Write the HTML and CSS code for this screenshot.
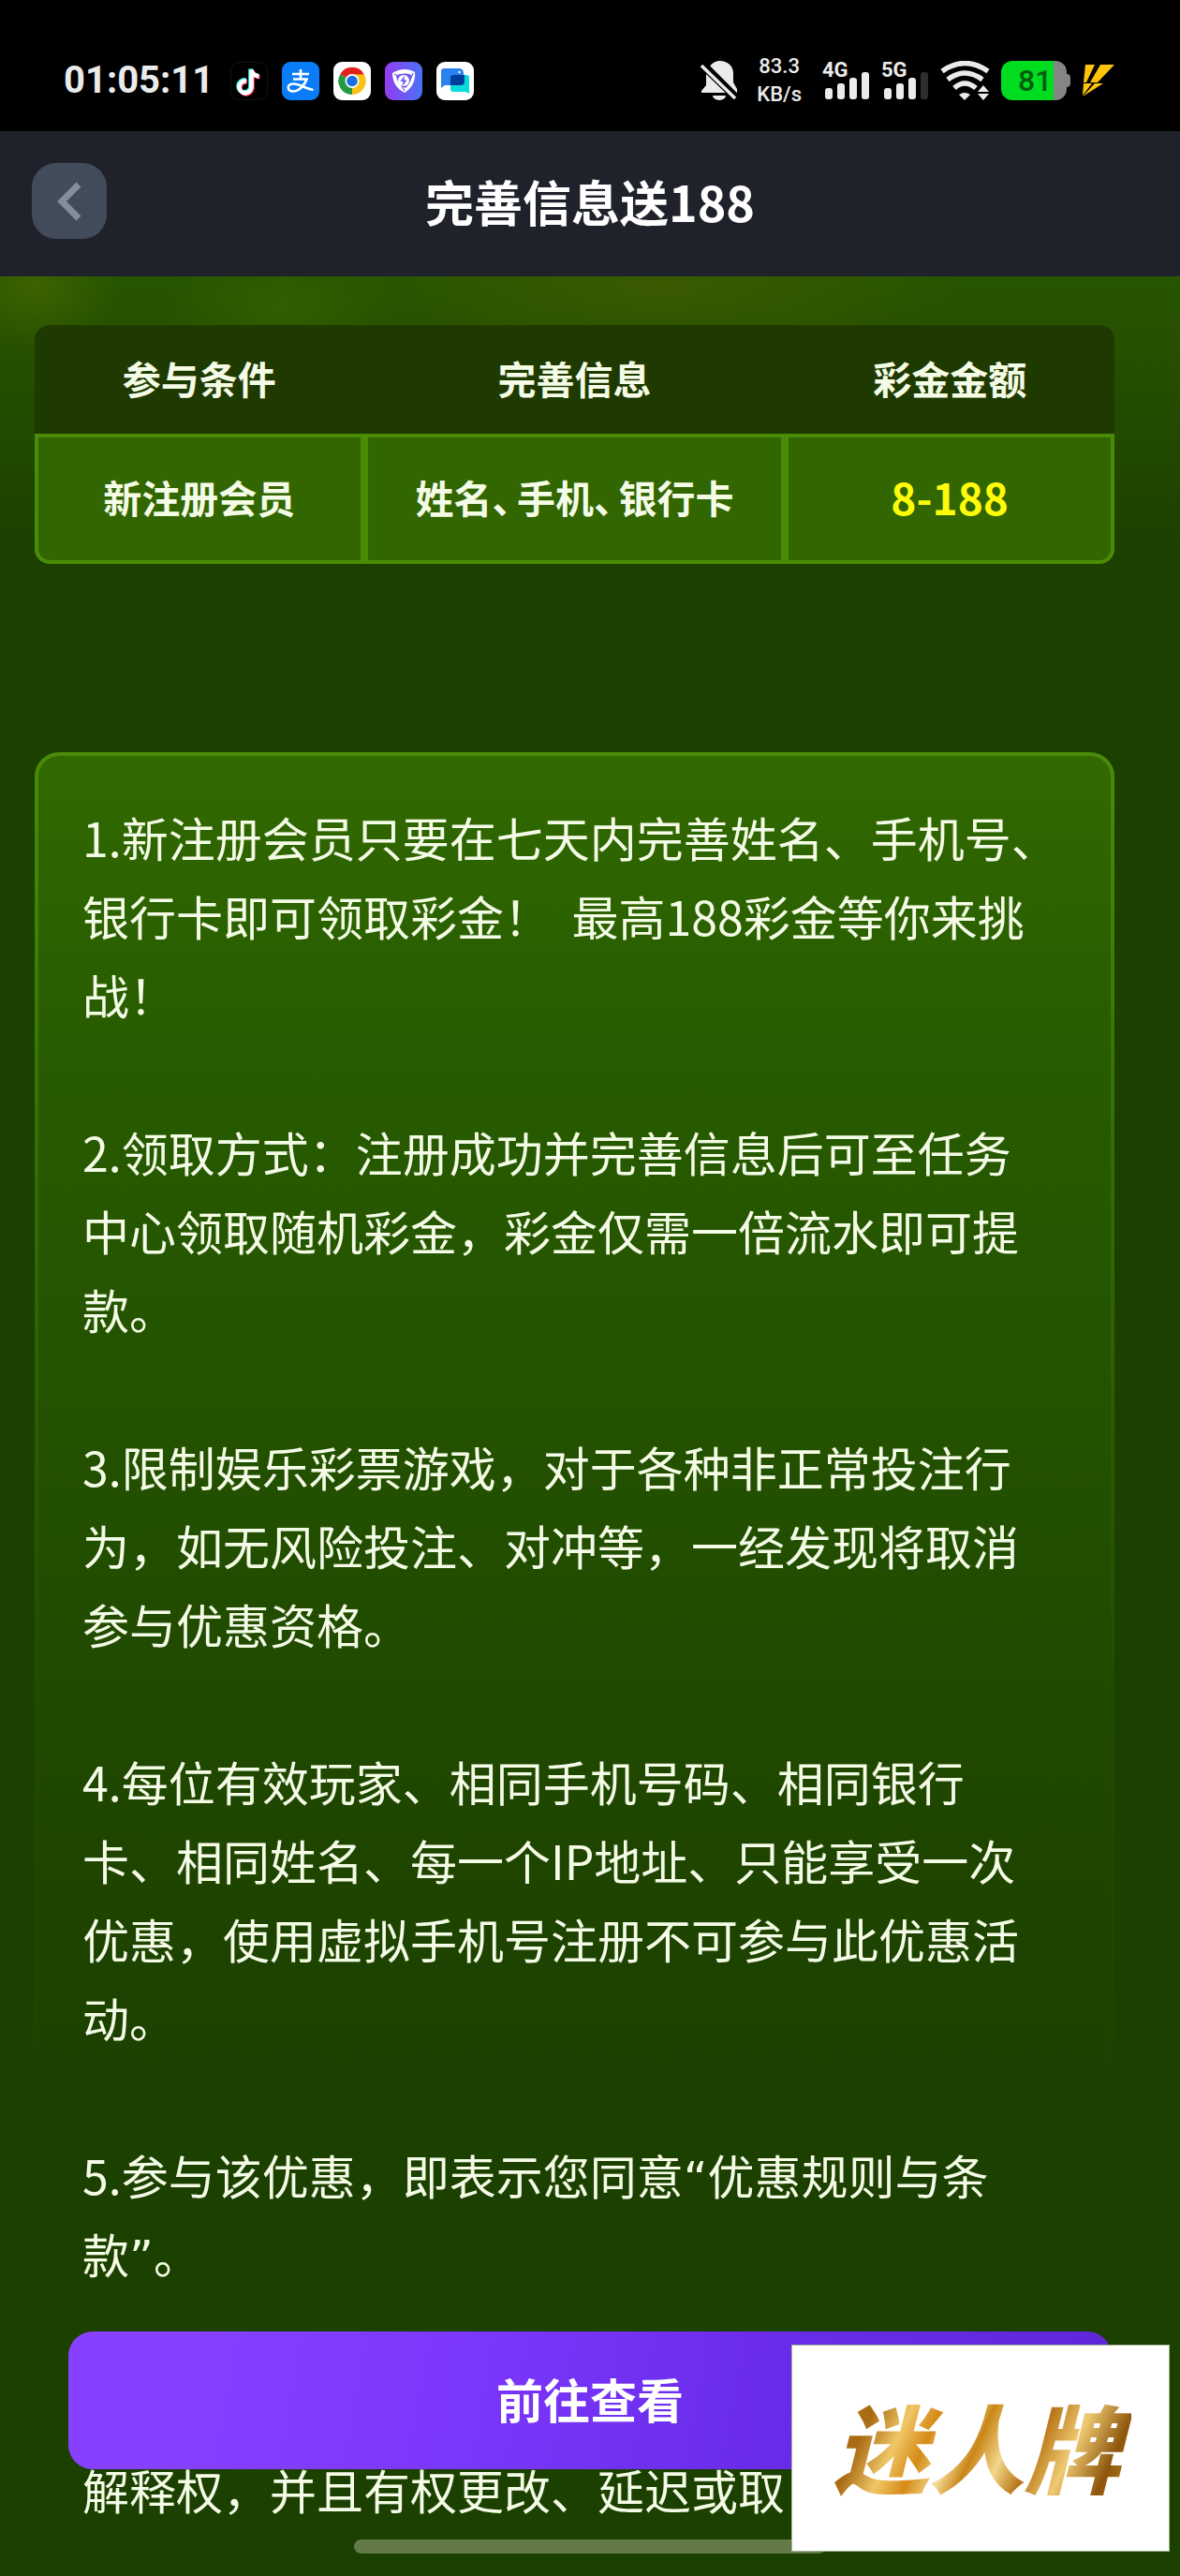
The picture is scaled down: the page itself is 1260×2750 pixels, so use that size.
FILE: index.html
```html
<!DOCTYPE html>
<html lang="zh-CN">
<head>
<meta charset="utf-8">
<meta name="viewport" content="width=device-width, initial-scale=1">
<title>完善信息送188</title>
<link rel="stylesheet" href="styles.css">
</head>
<body>
<div class="status">
  <div class="status-left">
    <span class="clock">01:05:11</span>
    <svg class="app" viewBox="0 0 40 41"><rect x=".5" y=".5" width="39" height="40" rx="9" fill="#000" stroke="#141414"/>
      <g fill="none" stroke-width="4.6"><path d="M16 19.500a6.500 6.500 0 1 0 5.500 6.500V7.500c.6 4 3.500 6.500 8 7" stroke="#25f4ee"/><path d="M18 21.500a6.500 6.500 0 1 0 5.500 6.500V9.500c.6 4 3.500 6.500 8 7" stroke="#fe2c55"/><path d="M17 20.500a6.500 6.500 0 1 0 5.500 6.500V8.500c.6 4 3.500 6.500 8 7" stroke="#fff"/></g></svg>
    <svg class="app" viewBox="0 0 40 41"><rect width="40" height="41" rx="9" fill="#0a7cf8"/>
      <g fill="none" stroke="#fff" stroke-width="2.600"><path d="M11 13h18M20 8v10M12 18.500h14.500c-2 6-8 13-14.500 13-7 0-7-8 0-8 8 0 12 5 21.500 6.500"/></g></svg>
    <svg class="app" viewBox="0 0 40 41"><rect width="40" height="41" rx="9" fill="#fff"/>
      <path d="M20 20.500 7.300 13.200A14.600 14.600 0 0 1 32.700 13.200Z" fill="#e3211c"/><path d="M20 20.500 32.700 13.200A14.600 14.600 0 0 1 20 35.100Z" fill="#fbc116"/><path d="M20 20.500V35.100A14.600 14.600 0 0 1 7.300 13.200Z" fill="#249a41"/><path d="M20 13.500h12.800l-6.500 10.800L20 35z" fill="#fbc116"/><circle cx="20" cy="20.500" r="7.500" fill="#fff"/><circle cx="20" cy="20.500" r="5.800" fill="#1a70e0"/></svg>
    <svg class="app" viewBox="0 0 40 41"><defs><linearGradient id="vio"><stop stop-color="#943cf0"/><stop offset="1" stop-color="#4a72f5"/></linearGradient></defs><rect width="40" height="41" rx="9" fill="url(#vio)"/>
      <path d="M8 12c8-5 17-5 24-1 1 9-3 17-11 22C13 29 8 22 8 12z" fill="#fff"/><path d="M12 15c5-3 11-3 16-1 0 6-2 10-6 14-6-2-9-7-10-13z" fill="#7357ef"/><path d="M10 13l10 5M30 12l-4 10M21 31l-5-9" stroke="#7357ef" stroke-width="1.200"/><circle cx="20" cy="20" r="6" fill="#fff"/><path d="M21 14.500 16.500 21h3l-1 5.500 5-7h-3z" fill="#6a5cf2"/></svg>
    <svg class="app" viewBox="0 0 40 41"><rect width="40" height="41" rx="9" fill="#fff"/>
      <path d="M5 10q0-3 3-3h16q4 0 5 4v10q0 4-4 4H9l-4 3z" fill="#2b82ef"/><path d="M18 14h14q3 0 3 3v17l-4-2H18q-3 0-3-3V17q0-3 3-3z" fill="#08dbdc"/><path d="M15 17q0-3 3-3h12v7q0 4-4 4H15z" fill="#003e9e"/><circle cx="24.500" cy="11" r="1.200" fill="#fff"/></svg>
  </div>
  <div class="status-right">
    <svg class="bell" viewBox="0 0 40 42"><path d="M8 13C8 5 14 0 21 0s14 5 14 13v10l4 7v4H1v-2l5-6V13z" fill="#ebebeb"/><path d="M13 37h14a7 5 0 0 1-14 0z" fill="#ebebeb"/><path d="M2 0 42 40" stroke="#000" stroke-width="4"/><path d="M1 5 37 40" stroke="#000" stroke-width="6"/><path d="M1 5 37 40" stroke="#ebebeb" stroke-width="3.500"/></svg>
    <span class="net">83.3<br>KB/s</span>
    <span class="signal">4G<svg viewBox="0 0 48 30"><g fill="#ebebeb"><rect y="17" width="8" height="12" rx="3"/><rect x="13" y="12" width="8" height="17" rx="3"/><rect x="26" y="6" width="8" height="23" rx="3"/><rect x="39" width="8" height="29" rx="3"/></g></svg></span>
    <span class="signal">5G<svg viewBox="0 0 48 30"><g fill="#ebebeb"><rect y="17" width="8" height="12" rx="3"/><rect x="13" y="12" width="8" height="17" rx="3"/><rect x="26" y="6" width="8" height="23" rx="3"/><rect x="39" width="8" height="29" rx="3" fill="#2e2e2e"/></g></svg></span>
    <svg class="wifi" viewBox="0 0 53 42"><g fill="none" stroke="#ebebeb" stroke-width="5.500"><path d="M2 11Q26 -6 51 11"/><path d="M8 20Q26 6 45 20"/><path d="M15 29Q26 19 38 29"/></g><path d="M20 36q6-4 12 0l-6 6z" fill="#ebebeb"/><path d="M46 26l6 7H40zM40 35h12l-6 7z" fill="#ebebeb"/></svg>
    <span class="battery">81</span>
    <svg class="bolt" viewBox="0 0 35 34"><path d="M4 0h10L5 19H2zM20 0h15L17 19H9zM2 20h9L1 33zM14 20h9L1 34z" fill="#fec40a"/></svg>
  </div>
</div>

<header class="bar">
  <button class="back" type="button" aria-label="返回"><svg viewBox="0 0 26 42"><path d="M23 3 5 21l18 18" fill="none" stroke="#858c9c" stroke-width="7"/></svg></button>
  <h1>完善信息送188</h1>
</header>

<main>
  <table class="offer">
    <thead><tr><th scope="col">参与条件</th><th scope="col" class="wide">完善信息</th><th scope="col">彩金金额</th></tr></thead>
    <tbody><tr><td>新注册会员</td><td>姓名<span class="sep">、</span>手机<span class="sep">、</span>银行卡</td><td class="amount">8-188</td></tr></tbody>
  </table>

  <section class="rules">
    <p>1.新注册会员只要在七天内完善姓名、手机号、<br>银行卡即可领取彩金！&nbsp;&nbsp;最高188彩金等你来挑<br>战！</p>
    <p>2.领取方式：注册成功并完善信息后可至任务<br>中心领取随机彩金，彩金仅需一倍流水即可提<br>款。</p>
    <p>3.限制娱乐彩票游戏，对于各种非正常投注行<br>为，如无风险投注、对冲等，一经发现将取消<br>参与优惠资格。</p>
    <p>4.每位有效玩家、相同手机号码、相同银行<br>卡、相同姓名、每一个IP地址、只能享受一次<br>优惠，使用虚拟手机号注册不可参与此优惠活<br>动。</p>
    <p>5.参与该优惠，即表示您同意<span class="quote">“</span>优惠规则与条<br>款<span class="quote">”</span>。</p>
    <p class="last">解释权，并且有权更改、延迟或取</p>
  </section>
</main>

<button class="go" type="button">前往查看</button>
<div class="home"></div>
<div class="brand"><span>迷人牌</span></div>
</body>
</html>
```
FILE: styles.css
```css
* { box-sizing: border-box; }

body {
  margin: 0;
  min-height: 100vh;
  background: #1c4000;
  color: #f4fbe6;
  font-family: "Noto Sans CJK SC", sans-serif;
}

/* Phone status bar */
.status {
  display: flex;
  justify-content: space-between;
  align-items: center;
  height: 140px;
  padding: 32px 70px 0 68px;
  background: #000;
  color: #ebebeb;
  font-family: Roboto, sans-serif;
}
.status-left { display: flex; align-items: center; gap: 15px; }
.clock { width: 163px; font-size: 40px; font-weight: 700; line-height: 48px; }
.app { width: 40px; height: 41px; }
.status-right { display: flex; align-items: center; gap: 12px; }
.bell { width: 40px; height: 42px; margin-right: 8px; }
.net { margin-right: 10px; font-size: 22px; font-weight: 500; line-height: 30px; text-align: center; }
.signal { position: relative; width: 51px; height: 42px; font-size: 22px; font-weight: 700; line-height: 20px; }
.signal svg { position: absolute; right: 0; bottom: 0; width: 48px; height: 30px; }
.wifi { width: 53px; height: 42px; }
.battery {
  position: relative;
  width: 70px;
  height: 42px;
  margin-right: 4px;
  padding-left: 18px;
  border-radius: 12px;
  background: linear-gradient(90deg, #00dc20 80%, #858585 80%);
  color: #005c0c;
  font-size: 32px;
  font-weight: 500;
  line-height: 42px;
}
.battery::after {
  content: "";
  position: absolute;
  left: 100%;
  top: 14px;
  width: 4px;
  height: 14px;
  border-radius: 0 4px 4px 0;
  background: #858585;
}
.bolt { width: 35px; height: 34px; }

/* Title bar */
.bar {
  display: grid;
  grid-template-columns: 80px 1fr 80px;
  align-items: center;
  height: 155px;
  padding: 0 34px 6px;
  background: #20222b;
}
.back {
  display: flex;
  align-items: center;
  justify-content: center;
  width: 80px;
  height: 81px;
  padding: 0;
  border: 0;
  border-radius: 26px;
  background: #424b59;
}
.back svg { width: 26px; height: 42px; }
.bar h1 { margin: 0; color: #fff; font-size: 52px; font-weight: 700; line-height: 76px; text-align: center; }

main {
  padding: 52px 70px 0 37px;
  background:
    radial-gradient(ellipse 90px 70px at 3% 10px, #3d6200 0, transparent 100%),
    radial-gradient(ellipse 130px 70px at 24% 30px, #325e00 0, transparent 100%),
    radial-gradient(ellipse 330px 80px at 56% 10px, #3a5a00 0, transparent 100%),
    linear-gradient(#275500 0, #275000 60px, #224a00 160px, #1c4000 290px);
}

.offer { width: 100%; border-spacing: 0; table-layout: fixed; font-size: 41px; font-weight: 700; line-height: 60px; text-align: center; }
.offer th { height: 116px; padding: 0 0 4px; background: #1f3a00; }
.offer .wide { width: 39%; }
.offer th:first-child { border-radius: 16px 0 0 0; }
.offer th:last-child { border-radius: 0 16px 0 0; }
.offer td { height: 139px; padding: 0 0 6px; border: 4px solid #4a8c08; background: #316600; }
.offer td:first-child { border-radius: 0 0 0 16px; }
.offer td:last-child { border-radius: 0 0 16px 0; }
.offer .amount { color: #fffb0a; font-size: 46px; }
.sep { padding-right: 6px; font-feature-settings: "halt"; }

.rules {
  margin-top: 201px;
  padding: 44px 47px 50px;
  border: 4px solid transparent;
  border-bottom: 0;
  border-radius: 26px 26px 0 0;
  background:
    linear-gradient(#326900, #285c00 300px, #245200 700px, #1e4400 1200px, #1c4000 1500px) padding-box,
    linear-gradient(#4a8c08, #356f04 400px, #224b00 1000px, #1c4000 1500px) border-box;
  font-size: 50px;
  line-height: 84px;
  white-space: nowrap;
}
.rules p { margin: 0 0 84px; }
.rules .last { margin: 0; padding-top: 84px; }
.quote { font-family: "DejaVu Sans", sans-serif; line-height: 1; }

/* Layers over the page */
.go {
  position: fixed;
  left: 73px;
  right: 73px;
  bottom: 114px;
  height: 147px;
  padding: 0 0 6px;
  border: 0;
  border-radius: 26px;
  background: linear-gradient(100deg, #8740ff 10%, #7a36fb 40%, #6a2cea 65%, #5f27d8);
  color: #fff;
  font: 700 50px "Noto Sans CJK SC", sans-serif;
}
.home {
  position: fixed;
  left: 30%;
  right: 30%;
  bottom: 24px;
  height: 15px;
  border-radius: 8px;
  background: #637a48;
}
.brand {
  position: fixed;
  right: 11px;
  bottom: 26px;
  display: flex;
  align-items: center;
  justify-content: center;
  width: 404px;
  height: 221px;
  padding: 0 8px 8px 0;
  border: 1px solid #a9b99a;
  background: #fff;
  font-size: 102px;
  font-style: italic;
  font-weight: 900;
  line-height: 150px;
}
.brand span {
  padding: 0 12px;
  background: linear-gradient(115deg, #b9791a 8%, #a86a12 18%, #f0c766 28%, #d58a16 36%, #f5dc96 44%, #c98618 50%, #f3d78c 58%, #b87516 66%, #efca72 76%, #8d560c 88%, #d29a34);
  background-clip: text;
  -webkit-background-clip: text;
  color: transparent;
}
```
